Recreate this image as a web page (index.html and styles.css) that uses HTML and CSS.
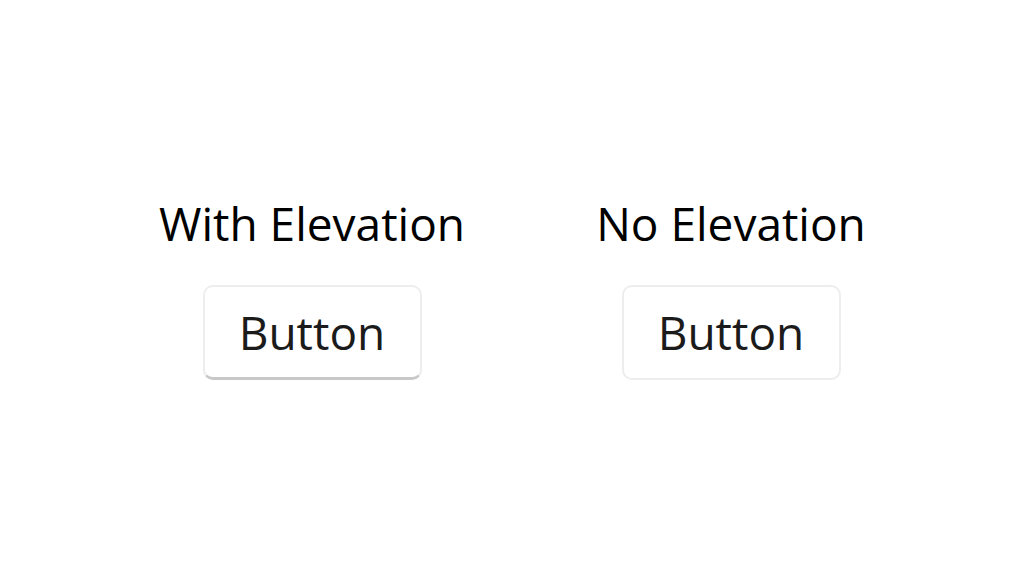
FILE: index.html
```html
<!DOCTYPE html>
<html lang="en">
<head>
  <meta charset="UTF-8">
  <meta name="viewport" content="width=device-width, initial-scale=1.0">
  <title>Button Elevation</title>
  <link rel="stylesheet" href="styles.css">
</head>
<body>
  <div class="page">
    <div class="demo">
      <div class="column">
        <div class="title">With Elevation</div>
        <button class="btn elevated">Button</button>
      </div>
      <div class="column">
        <div class="title">No Elevation</div>
        <button class="btn flat">Button</button>
      </div>
    </div>
  </div>
</body>
</html>
```

FILE: styles.css
```css
body {
  margin: 0;
  background: #fff;
  font-family: 'Open Sans', 'Noto Sans', sans-serif;
  color: #000;
}

.page {
  height: 576px;
  display: flex;
  align-items: center;
  justify-content: center;
}

.demo {
  display: flex;
  gap: 109px;
  margin-top: -4px;
  margin-left: 19px;
}

.column {
  width: 310px;
  display: flex;
  flex-direction: column;
  align-items: center;
}

.title {
  font-size: 46px;
  line-height: 60px;
}

.btn {
  margin-top: 32px;
  width: 219px;
  height: 95px;
  background: #fff;
  border: 2px solid #ededed;
  border-radius: 10px;
  font-family: inherit;
  font-size: 46px;
  color: #1b1b1b;
  padding: 0;
}

.elevated {
  border-bottom-color: #c8c8c8;
  border-bottom-width: 3px;
}
```
